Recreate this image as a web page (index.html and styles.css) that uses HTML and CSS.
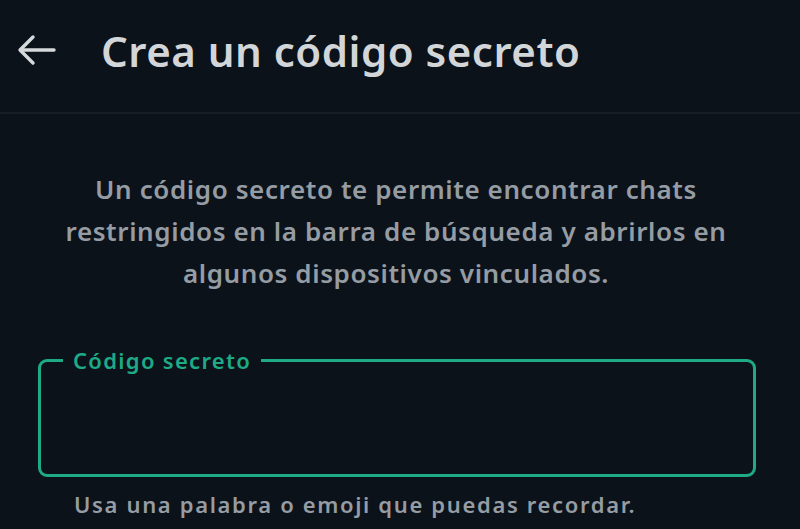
FILE: index.html
```html
<!DOCTYPE html>
<html>
<head>
  <meta charset="UTF-8">
  <title>Crea un código secreto</title>
  <link rel="stylesheet" href="styles.css">
</head>
<body>

  <header class="topbar">
    <button class="back" aria-label="Atrás">
      <svg width="40" height="32" viewBox="0 0 40 32" fill="none" stroke="currentColor" stroke-width="3.4" stroke-linecap="round" stroke-linejoin="round">
        <path d="M37 16H4"/>
        <path d="M16 3L3 16l13 13"/>
      </svg>
    </button>
    <h1 class="title">Crea un código secreto</h1>
  </header>

  <main class="content">
    <p class="intro">Un código secreto te permite encontrar chats restringidos en la barra de búsqueda y abrirlos en algunos dispositivos vinculados.</p>

    <fieldset class="field">
      <legend>Código secreto</legend>
      <input type="text" class="field-input" aria-label="Código secreto">
    </fieldset>
    <p class="hint">Usa una palabra o emoji que puedas recordar.</p>
  </main>

</body>
</html>
```

FILE: styles.css
```css
/* page */
body {
  margin: 0;
  background: #0b121a;
  font-family: "Noto Sans", "Open Sans", sans-serif;
  color: #e3e6e8;
  overflow: hidden;
}

/* top bar */
.topbar {
  display: flex;
  align-items: center;
  height: 114px;
  padding: 0 0 0 17px;
  border-bottom: 2px solid #151d25;
  box-sizing: border-box;
}

.back {
  background: none;
  border: none;
  padding: 0;
  color: #d6d9dc;
  display: flex;
  margin-top: -12px;
}

.title {
  margin: -12px 0 0 44px;
  font-size: 42px;
  font-weight: 600;
  color: #d3d6d9;
  letter-spacing: 0.5px;
}

/* body */
.content {
  padding: 0 44px 0 38px;
}

.intro {
  margin: 54px 0 0 0;
  text-align: center;
  font-size: 26px;
  font-weight: 600;
  letter-spacing: 0.6px;
  line-height: 42px;
  color: #959ca3;
  padding: 0 14px 0 12px;
}

.field {
  margin: 56px 0 0 0;
  padding: 0;
  height: 127px;
  box-sizing: border-box;
  border: 3px solid #1eaa86;
  border-radius: 9px;
}

.field legend {
  margin-left: 22px;
  padding: 0 10px;
  font-size: 22px;
  font-weight: 600;
  letter-spacing: 1.3px;
  color: #1eaa86;
  line-height: 20px;
}

.field-input {
  width: 100%;
  height: 80px;
  background: transparent;
  border: none;
  outline: none;
  color: #e3e6e8;
  font-size: 22px;
}

.hint {
  margin: 12px 0 0 36px;
  font-size: 22px;
  font-weight: 600;
  letter-spacing: 1.65px;
  color: #959ca3;
}
```
